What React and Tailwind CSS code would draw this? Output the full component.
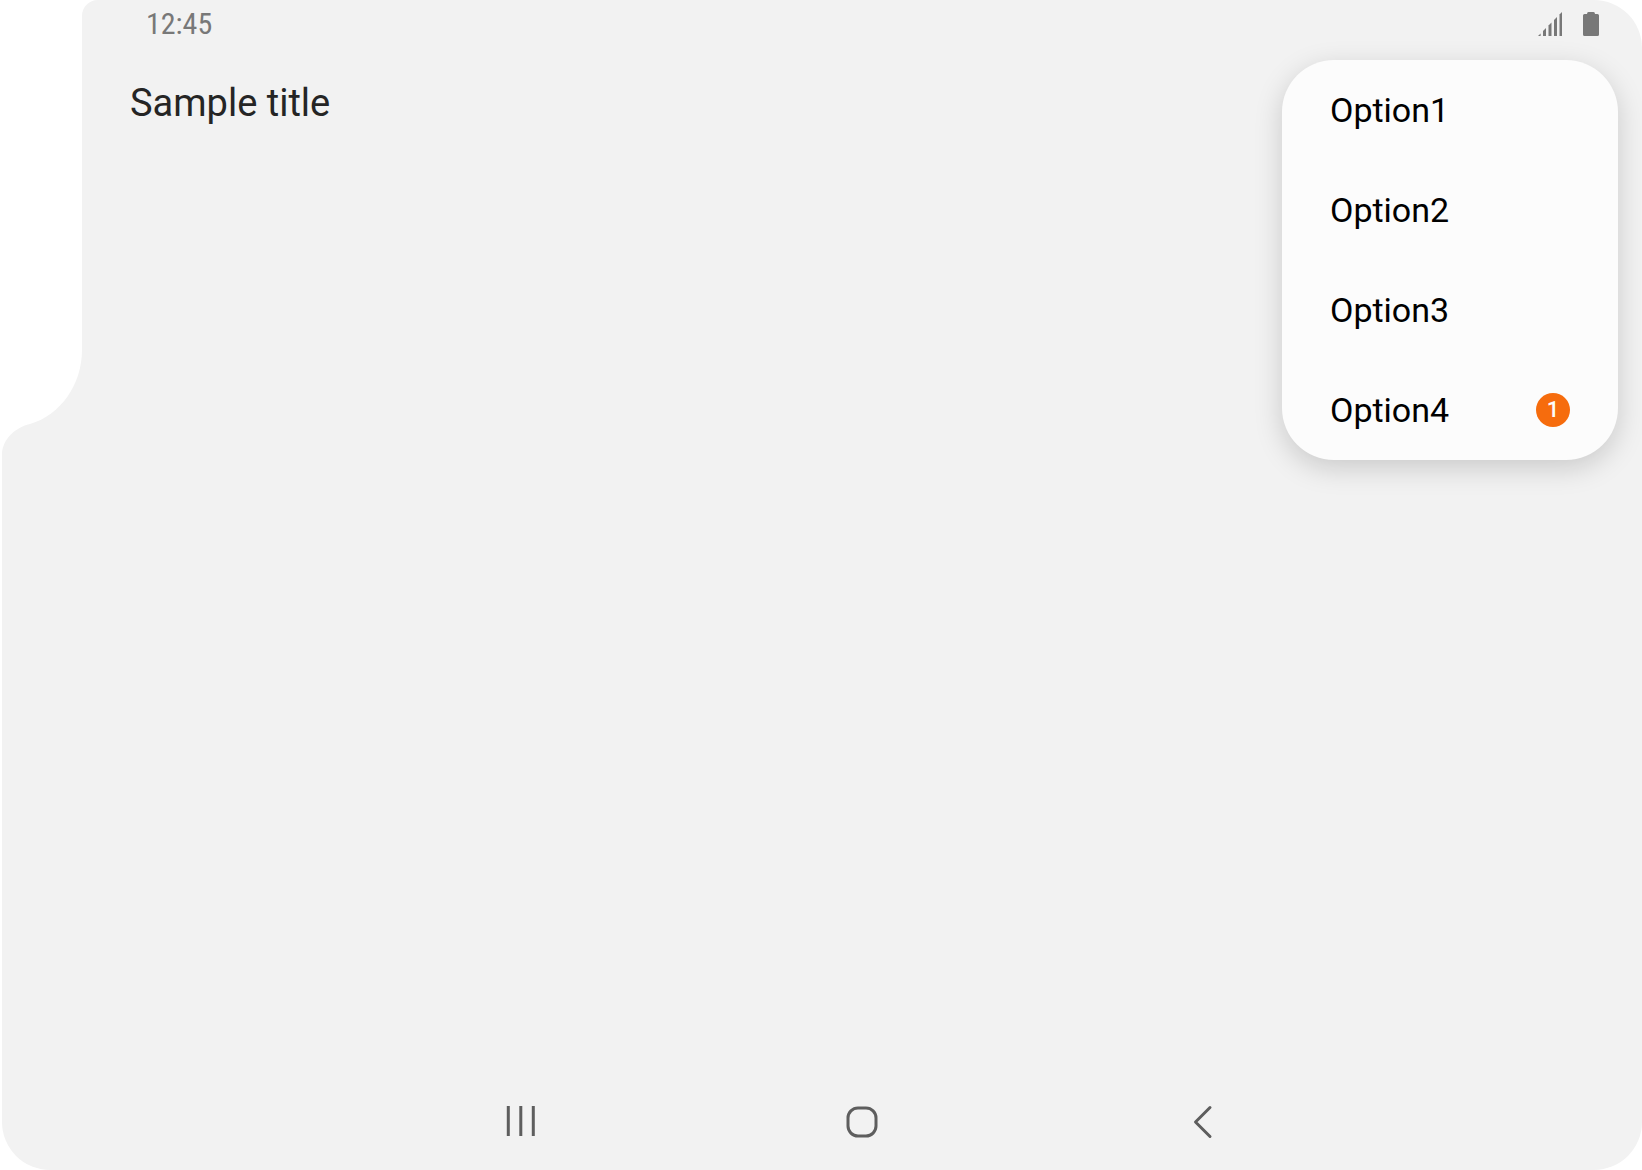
const OPTIONS = [
  { label: "Option1" },
  { label: "Option2" },
  { label: "Option3" },
  { label: "Option4", badge: 1 },
];

function EdgeCutout() {
  return (
    <svg className="absolute left-0 top-0" width="98" height="460" viewBox="0 0 98 460" fill="#fff" aria-hidden="true">
      <path d="M0 0H98C89 0 82 7 82 16V350C82 384 61 415 30 424C14 428 2 440 2 455V460H0Z" />
    </svg>
  );
}

function SignalIcon() {
  return (
    <svg width="24" height="24" viewBox="0 0 24 24" fill="#787878" role="img" aria-label="Signal">
      <path d="M0 24L2.6 21.4V24Z" />
      <path d="M5 19L8 16V24H5Z" />
      <path d="M10.5 13.5L13.5 10.5V24H10.5Z" />
      <path d="M16 8L19 5V24H16Z" />
      <path d="M21.5 2.5L24 0V24H21.5Z" />
    </svg>
  );
}

function BatteryIcon() {
  return (
    <svg width="16" height="24" viewBox="0 0 16 24" fill="#787878" role="img" aria-label="Battery">
      <path d="M5.5 0H10.5Q12 0 12 2H14.5Q16 2 16 3.5V22.5Q16 24 14.5 24H1.5Q0 24 0 22.5V3.5Q0 2 1.5 2H4Q4 0 5.5 0Z" />
    </svg>
  );
}

function NavIcon({ children }) {
  return (
    <svg width="34" height="34" viewBox="0 0 34 34" fill="none" stroke="#5e5e5e" strokeWidth="3" aria-hidden="true">
      {children}
    </svg>
  );
}

export default function App() {
  return (
    <div className="min-h-screen bg-white pl-0.5 font-[Roboto,sans-serif]">
      <div className="flex min-h-screen flex-col rounded-[48px] bg-[#f2f2f2] pl-20">
        <EdgeCutout />
        <header className="flex h-12 items-center justify-between pl-16 pr-[43px]">
          <time className="font-['Roboto_Condensed',Roboto,sans-serif] text-[30px] leading-9 text-[#787878]">12:45</time>
          <div className="flex items-center gap-[21px]">
            <SignalIcon />
            <BatteryIcon />
          </div>
        </header>
        <main className="relative flex-1 px-12 pt-8">
          <h1 className="text-[38px] leading-[46px] text-[#252525]">Sample title</h1>
          <ul
            role="menu"
            className="absolute right-6 top-3 w-84 rounded-[52px] bg-[#fcfcfc] shadow-[0_8px_28px_rgba(0,0,0,0.17)]"
          >
            {OPTIONS.map(({ label, badge }) => (
              <li key={label} role="none">
                <button
                  type="button"
                  role="menuitem"
                  className="flex h-25 w-full items-center justify-between px-12 text-left text-[34px] leading-10 text-black"
                >
                  <span>{label}</span>
                  {badge && (
                    <span className="flex size-[34px] items-center justify-center rounded-full bg-[#f66c0d] text-[22px] leading-6 font-medium text-[#fcfcfc]">
                      {badge}
                    </span>
                  )}
                </button>
              </li>
            ))}
          </ul>
        </main>
        <nav className="mx-auto grid h-24 w-full max-w-[1024px] grid-cols-3">
          <button type="button" aria-label="Recents" className="flex items-center justify-center">
            <NavIcon>
              <path d="M4.3 1V31M16.8 1V31M29.3 1V31" />
            </NavIcon>
          </button>
          <button type="button" aria-label="Home" className="flex items-center justify-center">
            <NavIcon>
              <rect x="3" y="3" width="28" height="28" rx="10" />
            </NavIcon>
          </button>
          <button type="button" aria-label="Back" className="flex items-center justify-center">
            <NavIcon>
              <path d="M24 2.5L9.5 17L24 31.5" strokeLinecap="round" strokeLinejoin="round" />
            </NavIcon>
          </button>
        </nav>
      </div>
    </div>
  );
}
